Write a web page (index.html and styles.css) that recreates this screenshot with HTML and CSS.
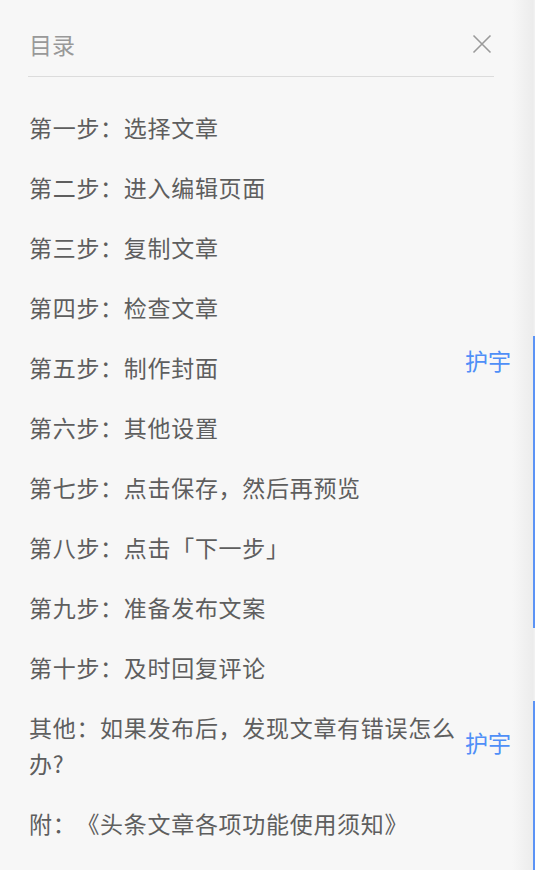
FILE: index.html
```html
<!DOCTYPE html>
<html lang="zh-CN">
<head>
<meta charset="utf-8">
<title>目录</title>
<link rel="stylesheet" href="styles.css">
</head>
<body>
<div class="panel">
  <div class="header">
    <span class="title">目录</span>
    <svg class="close" width="20" height="20" viewBox="0 0 20 20"><path d="M1.5 1.5 L18.5 18.5 M18.5 1.5 L1.5 18.5" stroke="#9a9a9a" stroke-width="1.6" fill="none"/></svg>
  </div>
  <ul class="toc">
    <li>第一步：选择文章</li>
    <li>第二步：进入编辑页面</li>
    <li>第三步：复制文章</li>
    <li>第四步：检查文章</li>
    <li>第五步：制作封面</li>
    <li>第六步：其他设置</li>
    <li>第七步：点击保存，然后再预览</li>
    <li>第八步：点击「下一步」</li>
    <li>第九步：准备发布文案</li>
    <li>第十步：及时回复评论</li>
    <li>其他：如果发布后，发现文章有错误怎么办?</li>
    <li>附：《头条文章各项功能使用须知》</li>
  </ul>
  <span class="tag tag-one">护宇</span>
  <span class="tag tag-two">护宇</span>
  <span class="bar bar-one"></span>
  <span class="bar bar-two"></span>
</div>
</body>
</html>
```
FILE: styles.css
```css
html, body {
  margin: 0;
  padding: 0;
  background: #f7f7f7;
}
body {
  font-family: "Noto Sans CJK SC", "Noto Sans", sans-serif;
  width: 535px;
  height: 870px;
  overflow: hidden;
  text-spacing-trim: space-all;
}
.panel {
  position: relative;
  height: 870px;
  padding: 0 41px 0 28px;
  background: linear-gradient(to right, #f7f7f7 0, #f7f7f7 512px, #ececec 533px, #f3f3f3 535px);
}
.header {
  display: flex;
  align-items: center;
  justify-content: space-between;
  height: 40px;
  padding: 24px 0 12px 0;
  border-bottom: 1.5px solid #dcdcdc;
}
.title {
  font-size: 23px;
  color: #999999;
  padding-left: 1px;
}
.close {
  margin-right: 2px;
}
.toc {
  list-style: none;
  margin: 0;
  padding: 20px 0 0 0;
}
.toc li {
  font-size: 23px;
  line-height: 36px;
  padding: 12px 30px 12px 1px;
  color: #5e5e5e;
  letter-spacing: 0.7px;
}
.tag {
  position: absolute;
  left: 465px;
  font-size: 23px;
  line-height: 26px;
  color: #4f8ff7;
}
.tag-one { top: 347px; }
.tag-two { top: 729px; }
.bar {
  position: absolute;
  left: 533px;
  width: 2px;
  background: #5b93f5;
}
.bar-one { top: 336px; height: 292px; }
.bar-two { top: 701px; height: 169px; }
```
